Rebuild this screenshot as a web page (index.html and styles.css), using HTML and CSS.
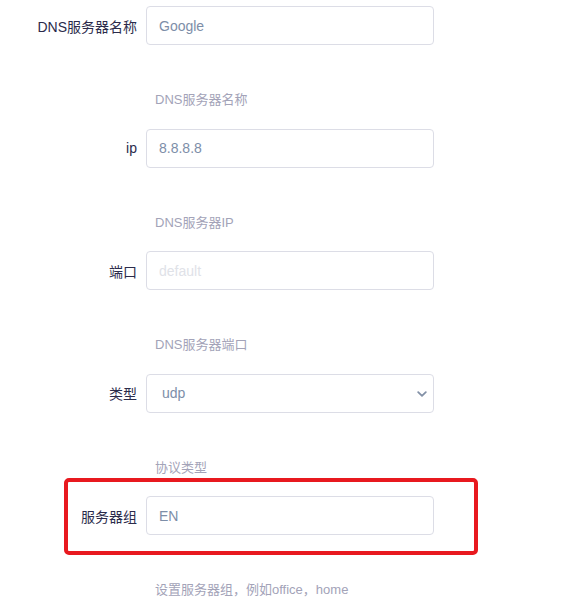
FILE: index.html
```html
<!DOCTYPE html>
<html lang="zh">
<head>
    <meta charset="UTF-8">
    <meta name="viewport" content="width=device-width, initial-scale=1.0">
    <title>DNS服务器</title>
    <link rel="stylesheet" href="styles.css">
</head>
<body>
    <form class="dns-form">
        <div class="form-group">
            <div class="form-row">
                <label for="name">DNS服务器名称</label>
                <input type="text" id="name" class="form-input" value="Google">
            </div>
            <p class="help">DNS服务器名称</p>
        </div>

        <div class="form-group">
            <div class="form-row">
                <label for="ip">ip</label>
                <input type="text" id="ip" class="form-input" value="8.8.8.8">
            </div>
            <p class="help">DNS服务器IP</p>
        </div>

        <div class="form-group">
            <div class="form-row">
                <label for="port">端口</label>
                <input type="text" id="port" class="form-input" placeholder="default">
            </div>
            <p class="help">DNS服务器端口</p>
        </div>

        <div class="form-group">
            <div class="form-row">
                <label for="type">类型</label>
                <div class="select-wrap">
                    <select id="type" class="form-input form-select">
                        <option>udp</option>
                        <option>tcp</option>
                    </select>
                    <svg class="chevron" width="10" height="6" viewBox="0 0 10 6">
                        <path d="M1.2 1.2 L5 4.8 L8.8 1.2" fill="none" stroke="#8391a7" stroke-width="1.8" stroke-linecap="round" stroke-linejoin="round"/>
                    </svg>
                </div>
            </div>
            <p class="help">协议类型</p>
        </div>

        <div class="form-group">
            <div class="form-row highlight">
                <label for="group">服务器组</label>
                <input type="text" id="group" class="form-input" value="EN">
            </div>
            <p class="help">设置服务器组，例如office，home</p>
        </div>
    </form>
</body>
</html>
```

FILE: styles.css
```css
/* Основные стили */
body {
    font-family: "Liberation Sans", "Noto Sans CJK SC", sans-serif;
    background-color: #fff;
    color: #2b2b4b;
    margin: 0;
    padding: 0;
}
.dns-form {
    padding: 6px 0 0 0;
}
.form-group {
    margin-bottom: 18.5px;
}
.form-row {
    display: flex;
    align-items: center;
}
.form-row label {
    width: 146px;
    padding-right: 9px;
    box-sizing: border-box;
    text-align: right;
    font-size: 14px;
    color: #2b2b4b;
}
.form-input {
    width: 288px;
    height: 39px;
    box-sizing: border-box;
    border: 1px solid #dcdde6;
    border-radius: 4px;
    padding: 0 12px;
    font-family: inherit;
    font-size: 14px;
    color: #7d8ea8;
    background: #fff;
    outline: none;
}
.form-input::placeholder {
    color: #e0e2e8;
}
.select-wrap {
    position: relative;
}
.form-select {
    -webkit-appearance: none;
    appearance: none;
    padding-left: 15px;
}
.chevron {
    position: absolute;
    right: 7px;
    top: 17px;
    pointer-events: none;
}
.help {
    margin: 45px 0 0 155px;
    line-height: 20px;
    font-size: 13px;
    color: #a3a3b8;
}

/* Выделение группы */
.highlight {
    position: relative;
}
.highlight::after {
    content: "";
    position: absolute;
    left: 64px;
    top: -18px;
    width: 414px;
    height: 77px;
    box-sizing: border-box;
    border: 4px solid #e8191f;
    border-radius: 5px;
    pointer-events: none;
}
```
